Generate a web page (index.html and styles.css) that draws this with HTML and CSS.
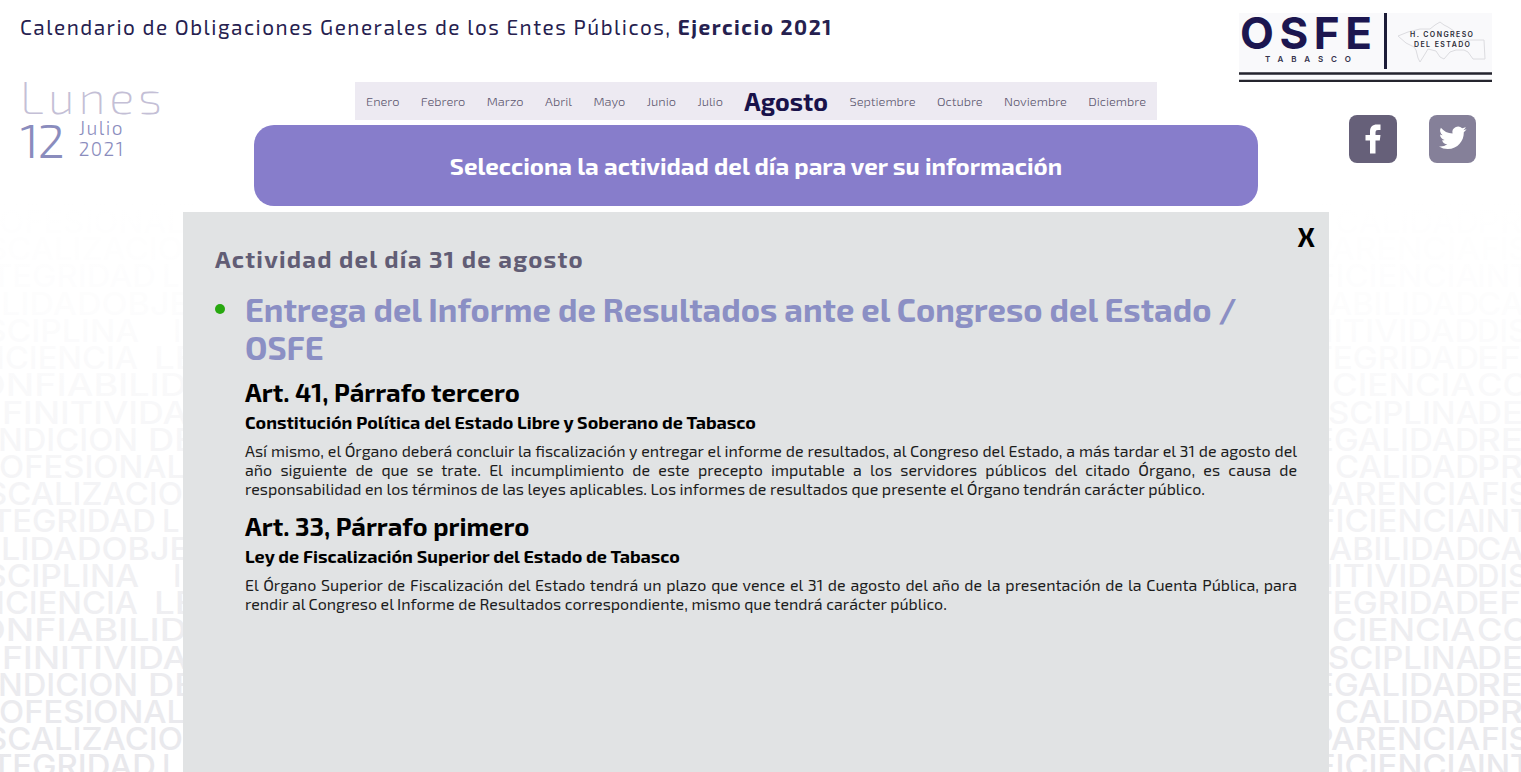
FILE: index.html
```html
<!DOCTYPE html>
<html lang="es">
<head>
<meta charset="utf-8">
<title>Calendario de Obligaciones</title>
<link rel="stylesheet" href="styles.css">
</head>
<body>
<svg class="backdrop" viewBox="0 0 1521 772" aria-hidden="true">
  <defs>
    <linearGradient id="fade" x1="0" y1="0" x2="0" y2="1">
      <stop offset="0.26" stop-color="#fff"/>
      <stop offset="0.4" stop-color="#fff" stop-opacity=".9"/>
      <stop offset="0.5" stop-color="#fff" stop-opacity=".75"/>
      <stop offset="0.65" stop-color="#fff" stop-opacity=".5"/>
      <stop offset="1" stop-color="#fff" stop-opacity="0"/>
    </linearGradient>
    <g id="words">
      <text lengthAdjust="spacingAndGlyphs" x="-15" y="342" textLength="154">SCIPLINA</text><text x="173" y="342">I</text>
      <text lengthAdjust="spacingAndGlyphs" x="1308" y="342" textLength="171">NITIVIDAD</text><text lengthAdjust="spacingAndGlyphs" x="1477" y="342" textLength="51">DIS</text>
      <text lengthAdjust="spacingAndGlyphs" x="-4" y="369.2" textLength="142">ICIENCIA</text><text lengthAdjust="spacingAndGlyphs" x="154" y="369.2" textLength="43">LE</text>
      <text lengthAdjust="spacingAndGlyphs" x="1311" y="369.2" textLength="168">TEGRIDAD</text><text lengthAdjust="spacingAndGlyphs" x="1477" y="369.2" textLength="44">EF</text>
      <text lengthAdjust="spacingAndGlyphs" x="-23" y="396.4" textLength="210">ONFIABILID</text>
      <text lengthAdjust="spacingAndGlyphs" x="1332" y="396.4" textLength="143">CIENCIA</text><text lengthAdjust="spacingAndGlyphs" x="1477" y="396.4" textLength="52">CO</text>
      <text lengthAdjust="spacingAndGlyphs" x="2" y="423.6" textLength="186">FINITIVIDA</text>
      <text lengthAdjust="spacingAndGlyphs" x="1328" y="423.6" textLength="151">SCIPLINA</text><text lengthAdjust="spacingAndGlyphs" x="1477" y="423.6" textLength="46">DE</text>
      <text lengthAdjust="spacingAndGlyphs" x="-2" y="450.8" textLength="140">NDICION</text><text lengthAdjust="spacingAndGlyphs" x="148" y="450.8" textLength="48">DE</text>
      <text lengthAdjust="spacingAndGlyphs" x="1314" y="450.8" textLength="165">EGALIDAD</text><text lengthAdjust="spacingAndGlyphs" x="1477" y="450.8" textLength="46">RE</text>
      <text lengthAdjust="spacingAndGlyphs" x="-1" y="478" textLength="186">OFESIONAL</text>
      <text lengthAdjust="spacingAndGlyphs" x="1335" y="478" textLength="144">CALIDAD</text><text lengthAdjust="spacingAndGlyphs" x="1477" y="478" textLength="46">PR</text>
      <text lengthAdjust="spacingAndGlyphs" x="-14" y="505.2" textLength="197">SCALIZACIO</text>
      <text lengthAdjust="spacingAndGlyphs" x="1312" y="505.2" textLength="168">PARENCIA</text><text lengthAdjust="spacingAndGlyphs" x="1481" y="505.2" textLength="48">FIS</text>
      <text lengthAdjust="spacingAndGlyphs" x="-9" y="532.4" textLength="165">TEGRIDAD</text><text x="162" y="532.4">L</text>
      <text lengthAdjust="spacingAndGlyphs" x="1316" y="532.4" textLength="163">FICIENCIA</text><text lengthAdjust="spacingAndGlyphs" x="1477" y="532.4" textLength="54">INT</text>
      <text lengthAdjust="spacingAndGlyphs" x="1" y="559.6" textLength="189">LIDADOBJE</text>
      <text lengthAdjust="spacingAndGlyphs" x="1329" y="559.6" textLength="150">ABILIDAD</text><text lengthAdjust="spacingAndGlyphs" x="1477" y="559.6" textLength="47">CA</text>
    </g>
  </defs>
  <g class="words"><use href="#words" y="-245"/><use href="#words"/><use href="#words" y="245"/></g>
  <rect width="1521" height="772" fill="url(#fade)"/>
</svg>

<div class="page">
  <h1 class="title"><span class="title-text">Calendario de Obligaciones Generales de los Entes Públicos,</span> <b class="title-year">Ejercicio 2021</b></h1>

  <div class="today">
    <div class="weekday">Lunes</div>
    <div class="date">
      <span class="day">12</span>
      <span class="month-year"><span class="mm">Julio</span><span class="yy">2021</span></span>
    </div>
  </div>

  <div class="center">
    <nav class="months">
      <a class="m1">Enero</a><a>Febrero</a><a>Marzo</a><a>Abril</a><a>Mayo</a><a>Junio</a><a>Julio</a><a class="active">Agosto</a><a>Septiembre</a><a>Octubre</a><a>Noviembre</a><a>Diciembre</a>
    </nav>
    <div class="banner"><span>Selecciona la actividad del día para ver su información</span></div>
  </div>

  <aside class="brand">
    <svg class="logo" width="253" height="70" viewBox="0 0 253 70">
      <rect y="1" width="253" height="69" fill="#f9f9fb"/>
      <text class="logo-name" lengthAdjust="spacing" x="1" y="37" textLength="132">OSFE</text>
      <text class="logo-place" x="26" y="50" textLength="86">TABASCO</text>
      <path d="M146.500 1V57" stroke="#1c1c38" stroke-width="3"/>
      <path class="map" d="M159 24l10-4 12-3 10 0 5-4 5-3 4 3 4 2 6 4 2 5 5 5 4-1h19l1 19h-12l-5-7-4-2h-8l-6 2-6 7-4-2-4-6-8-2-3 5-5 8-2-4-2-8-2-3-8-4z"/>
      <text class="logo-state" x="171" y="25" textLength="63">H. CONGRESO</text>
      <text class="logo-state" x="175" y="34.500" textLength="56">DEL ESTADO</text>
      <rect y="58" width="253" height="12" fill="#fbfbfc"/>
      <path d="M0 61.500H253M0 69H253" stroke="#25252e" stroke-width="2.500"/>
    </svg>
    <div class="social">
      <svg width="48" height="48" viewBox="0 0 48 48"><rect width="48" height="48" rx="8" fill="#666079"/><path fill="#fff" d="M21 38.500V25.500h-4.500V20h4.500v-3.500c0-4.500 2.500-7 7-7h3.500v5.500h-2.500c-1.700 0-2.500.8-2.500 2.500v2.500h5l-.7 5.500H26.500v13z"/></svg>
      <svg width="48" height="48" viewBox="0 0 48 48"><rect width="47" height="48" rx="8" fill="#858099"/><path fill="#fff" transform="translate(10 9) scale(1.150)" d="M23.950 4.570a10 10 0 0 1-2.820.77 4.960 4.960 0 0 0 2.160-2.720c-.95.550-2 .95-3.130 1.180a4.920 4.920 0 0 0-8.380 4.480C7.690 8.100 4.070 6.130 1.640 3.160a4.920 4.920 0 0 0 1.520 6.570 4.900 4.900 0 0 1-2.230-.61v.06c0 2.380 1.700 4.370 3.950 4.830a5 5 0 0 1-2.210.08 4.940 4.940 0 0 0 4.600 3.420A9.870 9.870 0 0 1 0 19.540a13.990 13.990 0 0 0 7.550 2.210c9.050 0 14-7.500 14-13.980 0-.21 0-.42-.02-.63a9.940 9.940 0 0 0 2.460-2.550z"/></svg>
    </div>
  </aside>

  <main class="panel">
    <span class="close">X</span>
    <h2 class="heading">Actividad del día 31 de agosto</h2>
    <div class="activity">
      <i class="dot"></i>
      <div class="detail">
        <h3 class="name"><span>Entrega del Informe de Resultados ante el Congreso del Estado /</span><br>OSFE</h3>
        <h4 class="article">Art. 41, Párrafo tercero</h4>
        <h5 class="law">Constitución Política del Estado Libre y Soberano de Tabasco</h5>
        <p class="text">Así mismo, el Órgano deberá concluir la fiscalización y entregar el informe de resultados, al Congreso del Estado, a más tardar el 31 de agosto del año siguiente de que se trate. El incumplimiento de este precepto imputable a los servidores públicos del citado Órgano, es causa de responsabilidad en los términos de las leyes aplicables. Los informes de resultados que presente el Órgano tendrán carácter público.</p>
        <h4 class="article second">Art. 33, Párrafo primero</h4>
        <h5 class="law">Ley de Fiscalización Superior del Estado de Tabasco</h5>
        <p class="text">El Órgano Superior de Fiscalización del Estado tendrá un plazo que vence el 31 de agosto del año de la presentación de la Cuenta Pública, para rendir al Congreso el Informe de Resultados correspondiente, mismo que tendrá carácter público.</p>
      </div>
    </div>
  </main>
</div>
</body>
</html>
```
FILE: styles.css
```css
* { box-sizing: border-box; }
body { margin: 0; height: 772px; overflow: hidden; background: #fff; font-family: "Exo 2", Roboto, "Noto Sans", sans-serif; }
h1, h2, h3, h4, h5, p { margin: 0; white-space: nowrap; }
.backdrop { position: absolute; top: 0; left: 0; width: 1521px; height: 772px; }
.words { font: 500 31px Inter, "Liberation Sans", sans-serif; fill: #e8e8ec; }
.page { position: relative; display: grid; grid-template: 82px 130px 560px / 183px 1146px 192px; width: 1521px; height: 772px; }
.title { grid-area: 1 / 1 / 2 / 3; padding: 13px 0 0 20px; font-size: 20.8px; line-height: 28px; font-weight: 400; color: #26214f; letter-spacing: 1.51px; }
.title-year { font-weight: 700; }

.today { grid-area: 2 / 1; padding-left: 20px; margin-top: -5px; }
.weekday { height: 38px; font-size: 47px; line-height: 36px; font-weight: 200; letter-spacing: 4px; color: #c4bfd6; }
.date { display: flex; gap: 15px; color: #8a8cbd; }
.day { font-size: 48px; line-height: 48px; font-weight: 300; letter-spacing: -1px; }
.month-year { display: grid; grid-auto-rows: 21px; padding-top: 2px; font-size: 19px; line-height: 22px; font-weight: 300; letter-spacing: 1.5px; }

.center { grid-area: 2 / 2; display: flex; flex-direction: column; align-items: center; gap: 5px; }
.months { display: flex; align-items: center; justify-content: space-between; width: 802px; height: 38px; padding: 0 11px; background: #edeaf2; font-size: 12.8px; font-weight: 300; color: #5d5870; }
.months .active { font-size: 25px; font-weight: 700; color: #19124a; }
.banner { display: flex; align-items: center; justify-content: center; width: 1004px; height: 81px; border-radius: 20px; background: #877dcb; color: #fff; font-size: 24px; font-weight: 700; }

.brand { grid-area: 1 / 2 / 3 / 4; justify-self: end; width: 253px; margin: 12px 29px 0 0; }
.logo { display: block; }
.logo-name { font: 700 44px Inter, sans-serif; fill: #1c1650; }
.logo-place { font: 600 8px Inter, sans-serif; fill: #35324c; }
.logo-state { font: 600 7px Inter, sans-serif; fill: #2b2b36; }
.map { fill: none; stroke: #dcdce0; stroke-width: 1; }
.social { display: flex; gap: 32px; padding: 33px 0 0 110px; }

.panel { position: relative; grid-area: 3 / 2; padding: 31px 32px 0; background: #e1e3e4; }
.close { position: absolute; top: 7px; right: 14px; font-size: 27px; line-height: 34px; font-weight: 700; color: #000; }
.heading { font-size: 24px; line-height: 32px; font-weight: 700; letter-spacing: 1.2px; color: #615d75; }
.activity { display: flex; gap: 20px; padding-top: 15px; }
.dot { flex: none; width: 10px; height: 10px; margin-top: 14px; border-radius: 50%; background: #27a80f; }
.detail { width: 1052px; }
.name { font-size: 32.65px; line-height: 38px; font-weight: 700; color: #8b8fc4; }
.article { margin-top: 10px; font-size: 25.6px; line-height: 32px; font-weight: 700; color: #000; }
.law { margin-top: 2px; font-size: 17.97px; line-height: 24px; font-weight: 700; color: #000; }
.text { margin-top: 7px; font-size: 16px; line-height: 19px; white-space: normal; text-align: justify; color: #1c1c1c; }
.second { margin-top: 12px; }
```
